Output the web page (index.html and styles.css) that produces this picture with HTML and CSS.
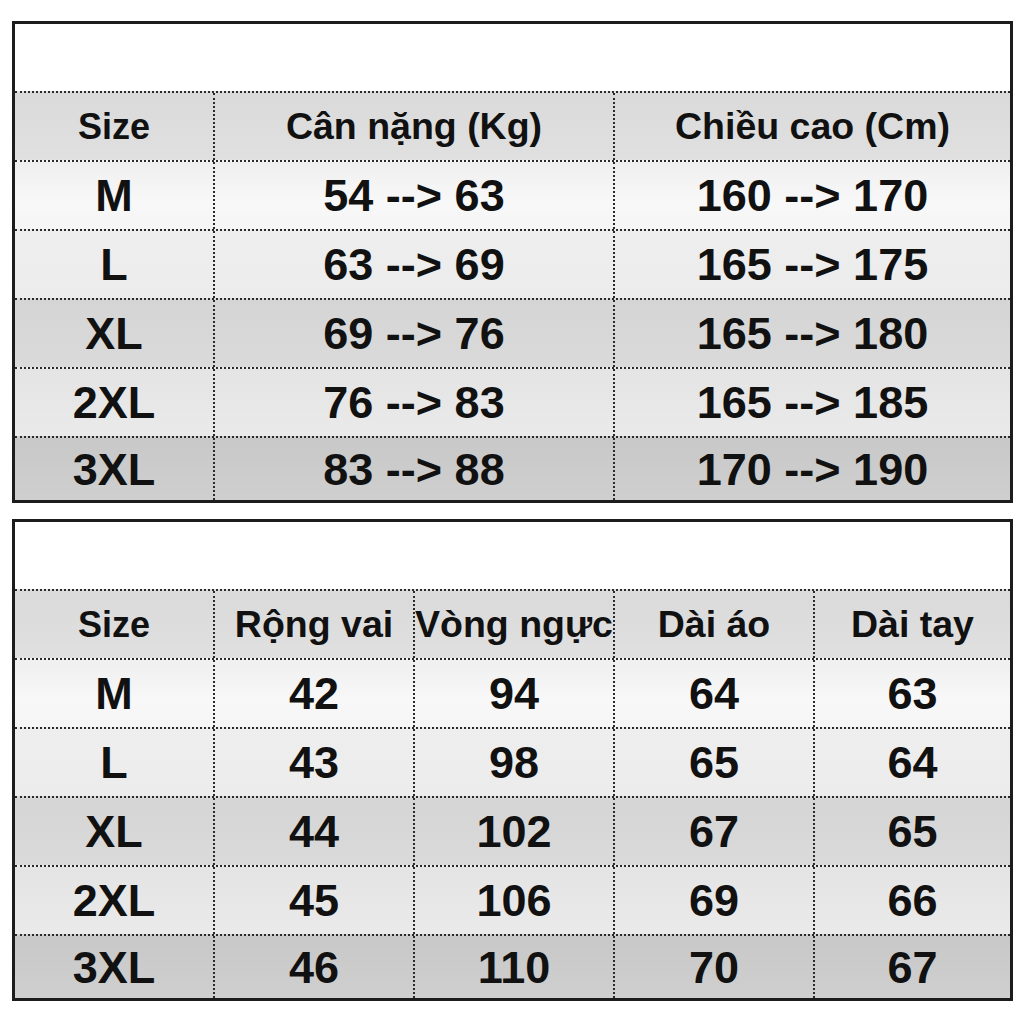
FILE: index.html
```html
<!DOCTYPE html>
<html lang="vi">
<head>
<meta charset="utf-8">
<title>Bảng size</title>
<link rel="stylesheet" href="styles.css">
</head>
<body>
<div class="page">
  <div class="table t3">
    <div class="blank"></div>
    <div class="row head"><div class="cell">Size</div><div class="cell">Cân nặng (Kg)</div><div class="cell">Chiều cao (Cm)</div></div>
    <div class="row r1"><div class="cell">M</div><div class="cell">54 --&gt; 63</div><div class="cell">160 --&gt; 170</div></div>
    <div class="row r2"><div class="cell">L</div><div class="cell">63 --&gt; 69</div><div class="cell">165 --&gt; 175</div></div>
    <div class="row r3"><div class="cell">XL</div><div class="cell">69 --&gt; 76</div><div class="cell">165 --&gt; 180</div></div>
    <div class="row r4"><div class="cell">2XL</div><div class="cell">76 --&gt; 83</div><div class="cell">165 --&gt; 185</div></div>
    <div class="row r5"><div class="cell">3XL</div><div class="cell">83 --&gt; 88</div><div class="cell">170 --&gt; 190</div></div>
  </div>
  <div class="table t5">
    <div class="blank"></div>
    <div class="row head"><div class="cell">Size</div><div class="cell">Rộng vai</div><div class="cell">Vòng ngực</div><div class="cell">Dài áo</div><div class="cell">Dài tay</div></div>
    <div class="row r1"><div class="cell">M</div><div class="cell">42</div><div class="cell">94</div><div class="cell">64</div><div class="cell">63</div></div>
    <div class="row r2"><div class="cell">L</div><div class="cell">43</div><div class="cell">98</div><div class="cell">65</div><div class="cell">64</div></div>
    <div class="row r3"><div class="cell">XL</div><div class="cell">44</div><div class="cell">102</div><div class="cell">67</div><div class="cell">65</div></div>
    <div class="row r4"><div class="cell">2XL</div><div class="cell">45</div><div class="cell">106</div><div class="cell">69</div><div class="cell">66</div></div>
    <div class="row r5"><div class="cell">3XL</div><div class="cell">46</div><div class="cell">110</div><div class="cell">70</div><div class="cell">67</div></div>
  </div>
</div>
</body>
</html>
```

FILE: styles.css
```css
* { box-sizing: border-box; }
html, body { margin: 0; padding: 0; background: #ffffff; }
body {
  font-family: "Liberation Sans", Arial, sans-serif;
  color: #111111;
}
.page {
  padding: 21px 11px 0 12px;
  display: flex;
  flex-direction: column;
  gap: 16px;
}
.table {
  width: 1001px;
  height: 482px;
  border: 3px solid #1c1c1c;
  background: #ffffff;
  display: grid;
  grid-template-rows: 67px repeat(5, 69px) 1fr;
}
.row {
  display: grid;
  border-top: 2px dotted #2a2a2a;
}
.t3 .row { grid-template-columns: 198px 400px 1fr; }
.t5 .row { grid-template-columns: 198px 200px 200px 200px 1fr; }
.cell {
  display: flex;
  align-items: center;
  justify-content: center;
  font-weight: bold;
  font-size: 45px;
  line-height: 1;
  white-space: nowrap;
}
.cell + .cell { border-left: 2px dotted #2a2a2a; }
.head .cell { font-size: 37.5px; }
.head .cell:first-child { font-size: 36px; }
.head { background: linear-gradient(#dadada, #e0e0e0); }
.r1 { background: linear-gradient(#efefef, #f8f8f8 60%, #f5f5f5); }
.r2 { background: linear-gradient(#eeeeee, #ececec); }
.r3 { background: linear-gradient(#d5d5d5, #dadada); }
.r4 { background: linear-gradient(#e4e4e4, #eaeaea); }
.r5 { background: linear-gradient(#c8c8c8, #cfcfcf); }
```
